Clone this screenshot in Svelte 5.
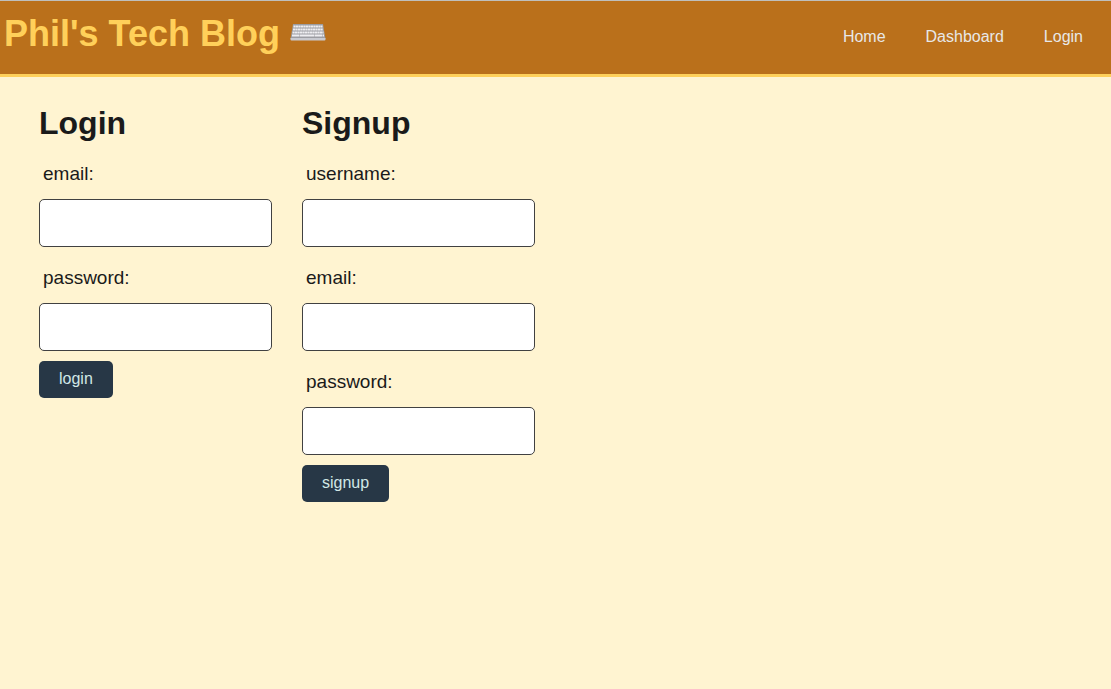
<script>
  const links = ['Home', 'Dashboard', 'Login'];
  const forms = [
    { id: 'login', title: 'Login', fields: ['email', 'password'] },
    { id: 'signup', title: 'Signup', fields: ['username', 'email', 'password'] }
  ];
  const keyRows = [
    { y: 2.5, x: 3.5, w: 29 },
    { y: 5.5, x: 3, w: 30 },
    { y: 8.5, x: 2.5, w: 31 },
    { y: 11.5, x: 2, w: 32 }
  ];
</script>

<header>
  <h1>
    Phil's Tech Blog
    <svg viewBox="0 0 36 17" width="36" height="17" aria-hidden="true">
      <path d="M3 0H33L35.5 15H0.5Z" fill="#9c9da2" />
      <path d="M0.5 14H35.5V15.5Q35.5 16.5 34.5 16.5H1.5Q0.5 16.5 0.5 15.5Z" fill="#c9cad0" />
      {#each keyRows as row}
        <path
          d="M{row.x} {row.y}h{row.w}"
          stroke="#eeeef1"
          stroke-width="2"
          stroke-dasharray={row.y === 11.5 ? '7 0.5 15 0.5' : '2.2 0.3'}
        />
      {/each}
    </svg>
  </h1>
  <nav>
    {#each links as link}
      <a href={'#' + link.toLowerCase()}>{link}</a>
    {/each}
  </nav>
</header>

<main>
  {#each forms as form}
    <form onsubmit={(e) => e.preventDefault()}>
      <h2>{form.title}</h2>
      {#each form.fields as field}
        <label for="{field}-{form.id}">{field}:</label>
        <input
          id="{field}-{form.id}"
          type={field === 'password' ? 'password' : 'text'}
        />
      {/each}
      <button type="submit">{form.id}</button>
    </form>
  {/each}
</main>

<style>
  :global(body) {
    margin: 0;
    background: #fff4d1;
    color: #1a1a1a;
    font-family: "Liberation Sans", Arial, sans-serif;
  }

  header {
    display: flex;
    flex-wrap: wrap;
    justify-content: space-between;
    align-items: flex-start;
    background: #ba701b;
    border-top: 1px solid #bfbfbd;
    border-bottom: 3px solid #ffd05a;
  }

  h1 {
    display: flex;
    align-items: center;
    gap: 10px;
    margin: 0;
    padding: 12px 4px 20px;
    font-size: 36px;
    line-height: 41px;
    color: #ffd05a;
  }

  svg {
    margin-bottom: 3px;
  }

  nav {
    display: flex;
    gap: 40px;
    padding: 27px 28px 0;
  }

  nav a {
    font-size: 16px;
    line-height: 18px;
    color: #e8e8e8;
    text-decoration: none;
  }

  main {
    display: flex;
    flex-wrap: wrap;
    gap: 30px;
    padding: 28px 39px;
  }

  form {
    display: flex;
    flex-direction: column;
    align-items: flex-start;
  }

  h2 {
    margin: 0 0 10px;
    font-size: 32px;
    line-height: 36px;
  }

  label {
    padding: 11px 4px 13px;
    font-size: 19px;
    line-height: 24px;
  }

  input {
    box-sizing: border-box;
    width: 233px;
    height: 48px;
    margin: 0 0 8px;
    padding: 12px;
    border: 1px solid #414141;
    border-radius: 5px;
    background: #fff;
    font: inherit;
  }

  button {
    margin-top: 2px;
    padding: 9px 20px 10px;
    border: 0;
    border-radius: 5px;
    background: #273746;
    color: #d1e8e6;
    font-family: inherit;
    font-size: 16px;
    line-height: 18px;
    cursor: pointer;
  }
</style>
